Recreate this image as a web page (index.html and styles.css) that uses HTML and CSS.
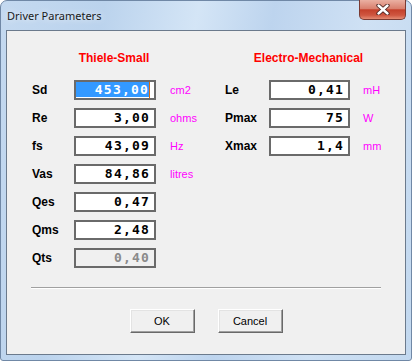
FILE: index.html
```html
<!DOCTYPE html>
<html lang="en">
<head>
    <meta charset="UTF-8">
    <meta name="viewport" content="width=device-width, initial-scale=1.0">
    <title>Driver Parameters</title>

    <link rel="stylesheet" href="styles.css">
</head>

<body>
    <div class="window">
        <div class="titlebar">
            <span class="title">Driver Parameters</span>
            <button class="close" title="Close">
                <svg width="14" height="11" viewBox="0 0 14 11">
                    <path d="M2.5 1.5 L11.5 9.5 M11.5 1.5 L2.5 9.5" stroke="#4a2320" stroke-width="4.2" stroke-linecap="round"/>
                    <path d="M2.5 1.5 L11.5 9.5 M11.5 1.5 L2.5 9.5" stroke="#ffffff" stroke-width="2.4" stroke-linecap="round"/>
                </svg>
            </button>
        </div>

        <div class="client">
            <div class="columns">
                <div class="group group-ts">
                    <h2>Thiele-Small</h2>
                    <div class="rows">
                        <div class="row">
                            <label>Sd</label>
                            <div class="field active"><span class="val">453,00</span><span class="caret"></span></div>
                            <span class="unit">cm2</span>
                        </div>
                        <div class="row">
                            <label>Re</label>
                            <div class="field"><span class="val">3,00</span></div>
                            <span class="unit">ohms</span>
                        </div>
                        <div class="row">
                            <label>fs</label>
                            <div class="field"><span class="val">43,09</span></div>
                            <span class="unit">Hz</span>
                        </div>
                        <div class="row">
                            <label>Vas</label>
                            <div class="field"><span class="val">84,86</span></div>
                            <span class="unit">litres</span>
                        </div>
                        <div class="row">
                            <label>Qes</label>
                            <div class="field"><span class="val">0,47</span></div>
                        </div>
                        <div class="row">
                            <label>Qms</label>
                            <div class="field"><span class="val">2,48</span></div>
                        </div>
                        <div class="row">
                            <label>Qts</label>
                            <div class="field disabled"><span class="val">0,40</span></div>
                        </div>
                    </div>
                </div>

                <div class="group group-em">
                    <h2>Electro-Mechanical</h2>
                    <div class="rows">
                        <div class="row">
                            <label>Le</label>
                            <div class="field"><span class="val">0,41</span></div>
                            <span class="unit">mH</span>
                        </div>
                        <div class="row">
                            <label>Pmax</label>
                            <div class="field"><span class="val">75</span></div>
                            <span class="unit">W</span>
                        </div>
                        <div class="row">
                            <label>Xmax</label>
                            <div class="field"><span class="val">1,4</span></div>
                            <span class="unit">mm</span>
                        </div>
                    </div>
                </div>
            </div>

            <div class="separator"></div>

            <div class="buttons">
                <button class="btn">OK</button>
                <button class="btn">Cancel</button>
            </div>
        </div>
    </div>
</body>
</html>
```

FILE: styles.css
```css
* {
    box-sizing: border-box;
}

body {
    margin: 0;
    background-color: #ffffff;
    font-family: "Liberation Sans", Arial, sans-serif;
    color: #000;
}

.window {
    width: 412px;
    height: 361px;
    display: flex;
    flex-direction: column;
    padding: 0 5px 5px 5px;
    border: 1px solid #7088a6;
    border-radius: 7px 7px 3px 3px;
    background: linear-gradient(100deg, #c4d9f0 0%, #bbd3ed 22%, #d4e5f6 42%, #bdd4ee 58%, #cfe1f4 78%, #c2d8ef 100%);
}

.titlebar {
    height: 29px;
    display: flex;
    align-items: center;
    padding-left: 1px;
}

.title {
    font-family: "Noto Sans", "Liberation Sans", sans-serif;
    font-size: 11px;
    color: #1a1a1a;
    text-shadow: 0 0 6px rgba(255, 255, 255, 0.9);
}

.close {
    margin-left: auto;
    align-self: flex-start;
    margin-top: -1px;
    width: 47px;
    height: 20px;
    padding: 0;
    display: flex;
    align-items: center;
    justify-content: center;
    border: 1px solid #7a3a32;
    border-top: none;
    border-radius: 0 0 5px 5px;
    background: linear-gradient(#eab0a2 0%, #d9806e 45%, #c4402b 52%, #cf5640 80%, #e48b73 100%);
    cursor: pointer;
}

.client {
    flex: 1;
    border: 1px solid #6b7a8c;
    background-color: #f0f0f0;
    padding-top: 19px;
}

.columns {
    display: flex;
    gap: 29px;
    padding-left: 25px;
}

.group-ts {
    width: 164px;
}

.group-em {
    width: 167px;
}

h2 {
    margin: 0 0 14px;
    font-size: 12px;
    line-height: 16px;
    font-weight: bold;
    color: #ff0000;
    text-align: center;
}

.rows {
    display: flex;
    flex-direction: column;
    gap: 8px;
}

.row {
    display: grid;
    grid-template-columns: 28px 82px auto;
    column-gap: 14px;
    align-items: center;
    height: 20px;
}

.group-em .row {
    grid-template-columns: 31px 81px auto;
    column-gap: 13px;
}

label {
    font-size: 12px;
    font-weight: bold;
    white-space: nowrap;
}

.field {
    height: 20px;
    display: flex;
    justify-content: flex-end;
    align-items: center;
    padding-right: 4px;
    border: 2px solid #6a6a6a;
    background-color: #ffffff;
}

.val {
    font-family: "DejaVu Sans Mono", "Liberation Mono", monospace;
    font-size: 13px;
    font-weight: bold;
    letter-spacing: 1.2px;
    line-height: 16px;
}

.field.active .val {
    flex: 1;
    align-self: flex-start;
    height: 15px;
    text-align: right;
    color: #ffffff;
    background-color: #3399ff;
}

.caret {
    align-self: flex-start;
    width: 1px;
    height: 16px;
    background-color: #d86a10;
}

.field.disabled {
    background-color: #f0f0f0;
}

.field.disabled .val {
    color: #8a8a8a;
}

.unit {
    font-size: 11px;
    color: #ff00ff;
}

.separator {
    margin: 19px 0 0 24px;
    width: 350px;
    height: 2px;
    border-top: 1px solid #a0a0a0;
    border-bottom: 1px solid #ffffff;
}

.buttons {
    display: flex;
    justify-content: center;
    gap: 23px;
    margin-top: 20px;
}

.btn {
    width: 65px;
    height: 24px;
    padding: 0;
    font-family: "Liberation Sans", Arial, sans-serif;
    font-size: 11px;
    color: #000;
    background-color: #f0f0f0;
    border: 1px solid;
    border-color: #ffffff #696969 #696969 #ffffff;
    box-shadow: inset -1px -1px 0 #a0a0a0, inset 1px 1px 0 #e3e3e3;
    cursor: pointer;
}
```
